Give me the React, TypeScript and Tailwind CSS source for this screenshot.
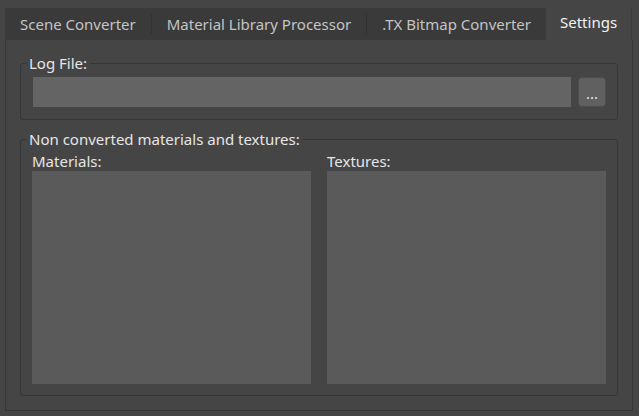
import React from 'react'

const tabs = ['Scene Converter', 'Material Library Processor', '.TX Bitmap Converter', 'Settings']
const activeTab = 'Settings'

function GroupBox({ title, className = '', children }: { title: string; className?: string; children: React.ReactNode }) {
  return (
    <fieldset className={`rounded-[3px] border border-[#363636] ${className}`}>
      <legend className="ml-[5px] px-[3px] text-[15px] leading-[20px] text-[#e6e6e6]">{title}</legend>
      {children}
    </fieldset>
  )
}

export default function App() {
  return (
    <div
      className="h-[416px] w-[639px] overflow-hidden bg-[#454545] px-[5px] pt-[8px]"
      style={{ fontFamily: '"Noto Sans", "Open Sans", sans-serif' }}
    >
      {/* tab strip */}
      <div className="flex h-[32px] w-[625px] bg-[#3a3a3a]">
        {tabs.map((t, i) => {
          const active = t === activeTab
          // separators sit between inactive tabs only
          const sep = i > 0 && !active && tabs[i - 1] !== activeTab
          return (
            <div key={t} className="flex shrink-0 items-center">
              {sep && <div className="h-[20px] w-px bg-[#313131]" />}
              <div
                className={
                  active
                    ? 'flex h-[32px] items-center whitespace-nowrap border-r border-[#3b3b3b] bg-[#454545] px-[14px] pb-[3px] text-[15px] text-[#f2f2f2]'
                    : 'flex h-[32px] items-center whitespace-nowrap px-[15px] text-[15px] text-[#c4c4c4]'
                }
              >
                {t}
              </div>
            </div>
          )
        })}
      </div>

      {/* settings pane */}
      <div className="flex h-[371px] w-[628px] flex-col border-x border-b border-[#373737] px-[14px] pt-[13px]">
        <GroupBox title="Log File:">
          <div className="flex gap-[7px] pt-[4px] pr-[11px] pb-[12px] pl-[12px]">
            <div className="h-[30px] flex-1 bg-[#646464]" />
            <button className="flex h-[30px] w-[28px] items-center justify-center rounded-[4px] border border-[#4e4e4e] bg-[#606060] pt-[2px] text-[15px] leading-none text-[#dfe8f5]">
              ...
            </button>
          </div>
        </GroupBox>

        <GroupBox title="Non converted materials and textures:" className="mt-[9px]">
          <div className="grid grid-cols-2 gap-[16px] pt-[2px] pr-[11px] pb-[11px] pl-[11px]">
            <div className="flex flex-col">
              <span className="text-[15px] leading-[20px] text-[#e6e6e6]">Materials:</span>
              <div className="h-[213px] bg-[#5a5a5a]" />
            </div>
            <div className="flex flex-col">
              <span className="text-[15px] leading-[20px] text-[#e6e6e6]">Textures:</span>
              <div className="h-[213px] bg-[#5a5a5a]" />
            </div>
          </div>
        </GroupBox>
      </div>
    </div>
  )
}
